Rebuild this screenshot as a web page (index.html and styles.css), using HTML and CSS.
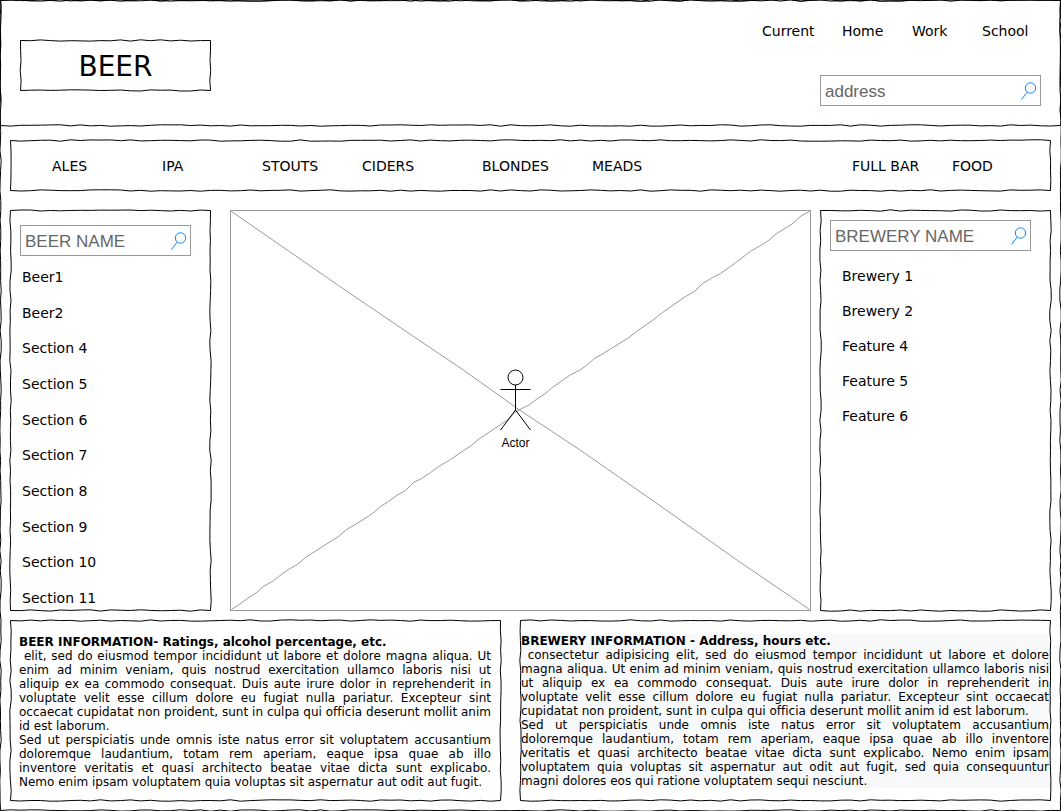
FILE: index.html
```html
<!DOCTYPE html>
<html lang="en">
<head>
<meta charset="utf-8">
<meta name="viewport" content="width=device-width, initial-scale=1">
<title>BEER</title>
<link rel="stylesheet" href="styles.css">
</head>
<body>
<svg class="symbols" aria-hidden="true">
  <symbol id="icon-search" viewBox="0 0 17 18">
    <circle cx="10.5" cy="6" r="5.2"/>
    <path d="M7.2 10.2L1.5 17.5"/>
  </symbol>
</svg>
<div class="page sketch">
  <header class="header sketch">
    <h1 class="logo sketch">BEER</h1>
    <div class="header-tools">
      <nav aria-label="Places">
        <ul class="places">
          <li><a href="#current">Current</a></li>
          <li><a href="#home">Home</a></li>
          <li><a href="#work">Work</a></li>
          <li><a href="#school">School</a></li>
        </ul>
      </nav>
      <form class="search search-address" role="search">
        <input type="text" aria-label="Address" placeholder="address">
        <button type="submit" aria-label="Search address"><svg class="icon"><use href="#icon-search"/></svg></button>
      </form>
    </div>
  </header>

  <nav class="menu sketch" aria-label="Categories">
    <ul class="menu-main">
      <li><a href="#ales">ALES</a></li>
      <li><a href="#ipa">IPA</a></li>
      <li><a href="#stouts">STOUTS</a></li>
      <li><a href="#ciders">CIDERS</a></li>
      <li><a href="#blondes">BLONDES</a></li>
      <li><a href="#meads">MEADS</a></li>
    </ul>
    <ul class="menu-side">
      <li><a href="#full-bar">FULL BAR</a></li>
      <li><a href="#food">FOOD</a></li>
    </ul>
  </nav>

  <main>
    <div class="columns">
      <aside class="beers sketch">
        <form class="search" role="search">
          <input type="text" aria-label="Beer name" placeholder="BEER NAME">
          <button type="submit" aria-label="Search beers"><svg class="icon"><use href="#icon-search"/></svg></button>
        </form>
        <ul class="beer-list">
          <li><a href="#b1">Beer1</a></li>
          <li><a href="#b2">Beer2</a></li>
          <li><a href="#s4">Section 4</a></li>
          <li><a href="#s5">Section 5</a></li>
          <li><a href="#s6">Section 6</a></li>
          <li><a href="#s7">Section 7</a></li>
          <li><a href="#s8">Section 8</a></li>
          <li><a href="#s9">Section 9</a></li>
          <li><a href="#s10">Section 10</a></li>
          <li><a href="#s11">Section 11</a></li>
        </ul>
      </aside>

      <div class="picture">
        <svg class="cross" viewBox="0 0 581 401" preserveAspectRatio="none" aria-hidden="true">
          <path d="M.5 .5L72 50L108 75L180 124L232 159L291 201L350 240L436 300L508 351L580.5 400.5"/>
          <path d="M.5 400.5L9 395L17 389L25 384L33 377L42 372L51 365L58 360L67 355L75 348L108 327L116 320L125 315L142 304L150 297L158 292L166 286L175 281L183 273L191 269L200 263L208 257L220 250L242 235L249 229L270 215L279 209L285 202L299 195L307 189L316 183L323 177L340 165L350 160L357 155L365 148L374 143L398 128L407 121L423 110L433 102L456 86L465 81L473 73L483 67L491 63L505 53L522 40L531 35L539 30L547 23L563 13L572 5L580.5 .5"/>
        </svg>
        <figure class="actor">
          <svg width="31" height="62" viewBox="0 0 31 62" aria-hidden="true">
            <circle cx="15.5" cy="8.5" r="7.5"/>
            <path d="M15.5 16V41M.5 20.5H30.5M15.5 41L.5 61M15.5 41L30.5 61"/>
          </svg>
          <figcaption>Actor</figcaption>
        </figure>
      </div>

      <aside class="breweries sketch">
        <form class="search" role="search">
          <input type="text" aria-label="Brewery name" placeholder="BREWERY NAME">
          <button type="submit" aria-label="Search breweries"><svg class="icon"><use href="#icon-search"/></svg></button>
        </form>
        <ul class="brewery-list">
          <li><a href="#br1">Brewery 1</a></li>
          <li><a href="#br2">Brewery 2</a></li>
          <li><a href="#f4">Feature 4</a></li>
          <li><a href="#f5">Feature 5</a></li>
          <li><a href="#f6">Feature 6</a></li>
        </ul>
      </aside>
    </div>

    <div class="details">
      <section class="info info-beer sketch">
        <div class="info-text">
          <h2>BEER INFORMATION- Ratings, alcohol percentage, etc.</h2>
          <p>&nbsp;elit, sed do eiusmod tempor incididunt ut labore et dolore magna aliqua. Ut enim ad minim veniam, quis nostrud exercitation ullamco laboris nisi ut aliquip ex ea commodo consequat. Duis aute irure dolor in reprehenderit in voluptate velit esse cillum dolore eu fugiat nulla pariatur. Excepteur sint occaecat cupidatat non proident, sunt in culpa qui officia deserunt mollit anim id est laborum.</p>
          <p>Sed ut perspiciatis unde omnis iste natus error sit voluptatem accusantium doloremque laudantium, totam rem aperiam, eaque ipsa quae ab illo inventore veritatis et quasi architecto beatae vitae dicta sunt explicabo. Nemo enim ipsam voluptatem quia voluptas sit aspernatur aut odit aut fugit.</p>
        </div>
      </section>
      <section class="info info-brewery sketch">
        <div class="info-text">
          <h2>BREWERY INFORMATION - Address, hours etc.</h2>
          <p>&nbsp;consectetur adipisicing elit, sed do eiusmod tempor incididunt ut labore et dolore magna aliqua. Ut enim ad minim veniam, quis nostrud exercitation ullamco laboris nisi ut aliquip ex ea commodo consequat. Duis aute irure dolor in reprehenderit in voluptate velit esse cillum dolore eu fugiat nulla pariatur. Excepteur sint occaecat cupidatat non proident, sunt in culpa qui officia deserunt mollit anim id est laborum.</p>
          <p>Sed ut perspiciatis unde omnis iste natus error sit voluptatem accusantium doloremque laudantium, totam rem aperiam, eaque ipsa quae ab illo inventore veritatis et quasi architecto beatae vitae dicta sunt explicabo. Nemo enim ipsam voluptatem quia voluptas sit aspernatur aut odit aut fugit, sed quia consequuntur magni dolores eos qui ratione voluptatem sequi nesciunt.</p>
        </div>
      </section>
    </div>
  </main>
</div>
<script src="sketch.js"></script>
</body>
</html>
```
FILE: styles.css
```css
* {
  box-sizing: border-box;
}

body {
  margin: 0;
  background: #fff;
  color: #000;
  font: 14px/24px "DejaVu Sans", sans-serif;
  font-variant-ligatures: none;
}

h1, h2, p, ul, figure {
  margin: 0;
  padding: 0;
}

ul {
  list-style: none;
}

a {
  color: inherit;
  text-decoration: none;
}

.symbols {
  display: none;
}

/* Hand-drawn frames */
.sketch {
  position: relative;
}

.sketch-line {
  position: absolute;
  top: 0;
  left: 0;
  overflow: visible;
  pointer-events: none;
  fill: none;
  stroke: #000;
}

.page {
  min-height: 100vh;
  padding-bottom: 10px;
  overflow: hidden;
}

/* Header */
.header {
  display: flex;
  justify-content: space-between;
  min-height: 126px;
  padding: 19px 0 20px 20px;
}

.logo {
  align-self: center;
  width: 191px;
  margin-top: 6px;
  padding-top: 2px;
  font-size: 28px;
  font-weight: 400;
  line-height: 49px;
  text-align: center;
}

.header-tools {
  display: flex;
  flex-direction: column;
  justify-content: space-between;
  align-items: flex-end;
}

.places {
  display: grid;
  grid-template-columns: 80px 70px 70px 79px;
}

/* Search boxes */
.search {
  display: flex;
  align-items: center;
  height: 31px;
  padding-right: 3px;
  border: 1px solid #999;
  background: #fff;
}

.search-address {
  width: 221px;
  margin-right: 20px;
}

.search input {
  flex: 1;
  min-width: 0;
  height: 29px;
  padding: 2px 4px 0;
  border: 0;
  background: none;
  color: #666;
  font: 17px "Liberation Sans", Arial, sans-serif;
}

.search input::placeholder {
  color: #666;
  opacity: 1;
}

.search button {
  display: flex;
  padding: 0;
  border: 0;
  background: none;
}

.icon {
  width: 17px;
  height: 18px;
  fill: none;
  stroke: #008cff;
}

/* Category menu */
.menu {
  display: flex;
  justify-content: space-between;
  align-items: center;
  min-height: 51px;
  margin: 14px 10px 0;
  padding-left: 42px;
}

.menu-main,
.menu-side {
  display: grid;
  grid-template-columns: 110px 100px 100px 120px 110px auto;
}

.menu-side {
  grid-template-columns: 100px 99px;
}

/* Middle row */
.columns {
  display: grid;
  grid-template-columns: 201px minmax(0, 1fr) 231px;
  gap: 9px;
  min-height: 401px;
  margin: 19px 10px 0;
}

.beers {
  display: flex;
  flex-direction: column;
  padding: 15px 20px 1px 10px;
}

.beer-list {
  display: flex;
  flex: 1;
  flex-direction: column;
  justify-content: space-between;
  margin-top: 9px;
  padding-left: 2px;
}

.breweries {
  padding: 10px 20px 10px 10px;
}

.brewery-list {
  margin-top: 8px;
  padding-left: 12px;
  line-height: 35px;
}

.picture {
  position: relative;
  margin-left: 10px;
  border: 1px solid #999;
}

.cross {
  position: absolute;
  inset: 0;
  width: 100%;
  height: 100%;
  fill: none;
  stroke: #999;
}

.actor {
  position: absolute;
  top: calc(50% - 42px);
  left: calc(50% - 25px);
  width: 40px;
  font: 12px/14px "Liberation Sans", Arial, sans-serif;
  text-align: center;
}

.actor svg {
  display: block;
  margin: 0 auto 5px;
  fill: none;
  stroke: #000;
}

/* Bottom row */
.details {
  display: grid;
  grid-template-columns: 491fr 531fr;
  gap: 19px;
  margin: 9px 10px 0;
}

.info {
  padding: 15px 10px 12px 9px;
  font-size: 12px;
  line-height: 14px;
}

.info h2 {
  font-size: 12px;
  font-weight: 700;
}

.info p {
  text-align: justify;
}

.info-brewery {
  padding: 14px 1px 13px;
}

.info-brewery .info-text {
  padding-right: 1px;
  background: #f8f9fa;
}
```
FILE: sketch.js
```js
// Draws a wavering pen line round every .sketch box and redraws it on resize.
const NS = "http://www.w3.org/2000/svg";
const STEP = 10;

function randomFrom(seed) {
  let s = seed * 7919 + 17;
  return () => {
    s = (s * 1103515245 + 12345) % 2147483648;
    return s / 2147483648;
  };
}

function side(points, x1, y1, x2, y2, random) {
  const length = Math.hypot(x2 - x1, y2 - y1);
  const dx = (x2 - x1) / length;
  const dy = (y2 - y1) / length;
  points.push([x1, y1]);
  for (let d = STEP; d < length; d += STEP) {
    const off = (random() - 0.5) * 1.5;
    points.push([x1 + dx * d - dy * off, y1 + dy * d + dx * off]);
  }
}

function draw(box, path, seed) {
  const right = box.offsetWidth - 0.5;
  const bottom = box.offsetHeight - 0.5;
  const random = randomFrom(seed);
  const points = [];
  side(points, 0.5, 0.5, right, 0.5, random);
  side(points, right, 0.5, right, bottom, random);
  side(points, right, bottom, 0.5, bottom, random);
  side(points, 0.5, bottom, 0.5, 0.5, random);
  path.setAttribute("d", "M" + points.map(p => p.map(n => n.toFixed(1)).join(" ")).join("L") + "Z");
}

document.querySelectorAll(".sketch").forEach((box, index) => {
  const svg = document.createElementNS(NS, "svg");
  const path = document.createElementNS(NS, "path");
  svg.setAttribute("class", "sketch-line");
  svg.setAttribute("width", "100%");
  svg.setAttribute("height", "100%");
  svg.setAttribute("aria-hidden", "true");
  svg.append(path);
  box.append(svg);
  draw(box, path, index + 1);
  new ResizeObserver(() => draw(box, path, index + 1)).observe(box);
});
```
